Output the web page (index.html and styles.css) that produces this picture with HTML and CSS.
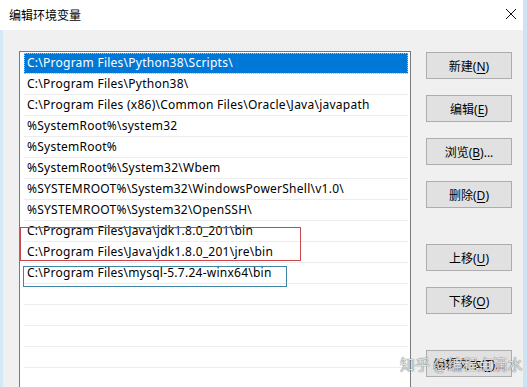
FILE: index.html
```html
<!DOCTYPE html>
<html lang="zh-CN">
<head>
  <meta charset="UTF-8">
  <meta name="viewport" content="width=device-width, initial-scale=1.0">
  <title>编辑环境变量</title>
  <link rel="stylesheet" href="styles.css">
</head>
<body>

  <div class="window">
    <div class="titlebar">
      <span class="title">编辑环境变量</span>
      <svg class="close" width="12" height="12" viewBox="0 0 12 12">
        <path d="M1 1 L11 11 M11 1 L1 11" stroke="#111" stroke-width="1" fill="none"/>
      </svg>
    </div>

    <div class="client">
      <div class="list">
        <div class="row selected">C:\Program Files\Python38\Scripts\</div>
        <div class="row">C:\Program Files\Python38\</div>
        <div class="row">C:\Program Files (x86)\Common Files\Oracle\Java\javapath</div>
        <div class="row">%SystemRoot%\system32</div>
        <div class="row">%SystemRoot%</div>
        <div class="row">%SystemRoot%\System32\Wbem</div>
        <div class="row">%SYSTEMROOT%\System32\WindowsPowerShell\v1.0\</div>
        <div class="row">%SYSTEMROOT%\System32\OpenSSH\</div>
        <div class="row">C:\Program Files\Java\jdk1.8.0_201\bin</div>
        <div class="row">C:\Program Files\Java\jdk1.8.0_201\jre\bin</div>
        <div class="row">C:\Program Files\mysql-5.7.24-winx64\bin</div>
        <div class="row"></div>
        <div class="row"></div>
        <div class="row"></div>
        <div class="row"></div>
        <div class="row"></div>

        <!-- annotation boxes drawn over the list -->
        <div class="mark mark-red"></div>
        <div class="mark mark-blue"></div>
      </div>

      <div class="buttons">
        <div class="group">
          <button>新建(<u>N</u>)</button>
          <button>编辑(<u>E</u>)</button>
          <button>浏览(<u>B</u>)...</button>
          <button>删除(<u>D</u>)</button>
        </div>
        <div class="group">
          <button>上移(<u>U</u>)</button>
          <button>下移(<u>O</u>)</button>
        </div>
        <div class="group">
          <button>编辑文本(<u>T</u>)...</button>
        </div>
      </div>
    </div>

    <div class="watermark">知乎 @编程点滴水</div>
  </div>

</body>
</html>
```

FILE: styles.css
```css
body {
  margin: 0;
  width: 527px;
  height: 387px;
  overflow: hidden;
  font-family: "Noto Sans", "Noto Sans CJK SC", sans-serif;
  font-size: 12px;
  color: #000;
}
.window {
  position: relative;
  height: 387px;
  border-right: 4px solid #cde4f5;
  background-color: #f0f0f0;
  display: flex;
  flex-direction: column;
}
.titlebar {
  height: 30px;
  flex-shrink: 0;
  background-color: #fff;
  display: flex;
  align-items: center;
  justify-content: space-between;
  padding: 0 6px 0 9px;
}
.title {
  font-family: "Noto Sans CJK SC", sans-serif;
  font-size: 12px;
  margin-top: -1px;
}
.close {
  margin-top: -2px;
}
.client {
  flex: 1;
  display: flex;
  border-left: 3px solid #d5e8f6;
  padding: 21px 11px 0 16px;
  overflow: hidden;
}
.list {
  position: relative;
  width: 392px;
  height: 360px;
  flex-shrink: 0;
  box-sizing: border-box;
  border: 1px solid #7a7a7a;
  border-bottom: none;
  background-color: #fff;
  padding: 1px 2px 0 4px;
}
.row {
  height: 20px;
  line-height: 20px;
  border-bottom: 1px solid #ececec;
  padding-left: 3px;
  letter-spacing: 0.25px;
  white-space: nowrap;
  overflow: hidden;
}
.row.selected {
  background-color: #0078d7;
  color: #fff;
  outline: 1px dotted #9fc8ec;
  outline-offset: -1px;
}
.mark {
  position: absolute;
  box-sizing: border-box;
}
.mark-red {
  left: 0;
  top: 175px;
  width: 281px;
  height: 34px;
  border: 1px solid #c8474b;
}
.mark-blue {
  left: 3px;
  top: 214px;
  width: 264px;
  height: 21px;
  border: 1px solid #3f86a6;
}
.buttons {
  margin-left: 15px;
  margin-top: 1px;
  display: flex;
  flex-direction: column;
}
.group {
  display: flex;
  flex-direction: column;
  gap: 16px;
}
.group + .group {
  margin-top: 36px;
}
button {
  width: 86px;
  height: 27px;
  padding: 0;
  border: 1px solid #adadad;
  background-color: #e1e1e1;
  font-family: "Noto Sans", "Noto Sans CJK SC", sans-serif;
  font-size: 12px;
  color: #000;
}
button u {
  text-underline-offset: 2px;
}
.watermark {
  position: absolute;
  left: 400px;
  top: 353px;
  font-family: "Noto Sans CJK SC", sans-serif;
  font-size: 15px;
  color: rgba(255, 255, 255, 0.75);
  text-shadow: 0 0 1px #777, 0 0 1px #777;
  white-space: nowrap;
}
```
